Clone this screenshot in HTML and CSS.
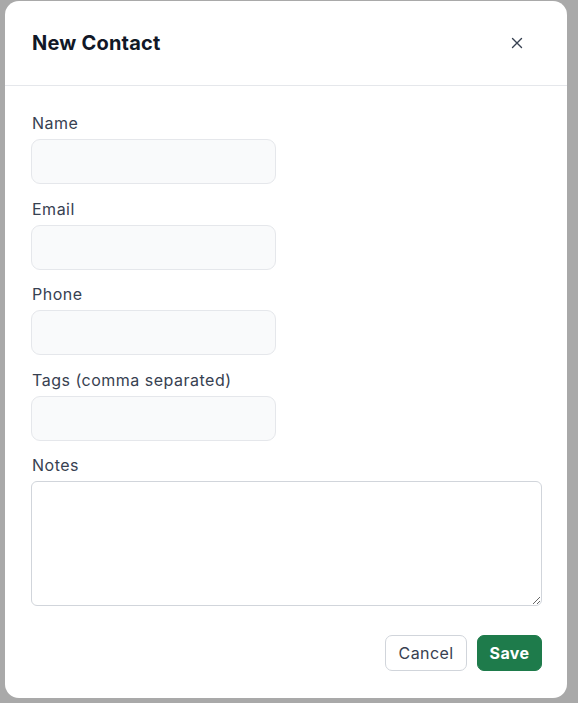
FILE: index.html
```html
<!DOCTYPE html>
<html lang="en">
<head>
<meta charset="utf-8">
<title>New Contact</title>
<link rel="stylesheet" href="styles.css">
</head>
<body>
<div class="backdrop">
  <div class="modal">
    <div class="modal-header">
      <h2 class="modal-title">New Contact</h2>
      <button class="close-btn" aria-label="Close">
        <svg width="12" height="12" viewBox="0 0 12 12"><path d="M1.5 1.5 L10.5 10.5 M10.5 1.5 L1.5 10.5" stroke="#374151" stroke-width="1.4" stroke-linecap="round" fill="none"/></svg>
      </button>
    </div>
    <form class="modal-body">
      <div class="field">
        <label class="label">Name</label>
        <input class="input" type="text">
      </div>
      <div class="field">
        <label class="label">Email</label>
        <input class="input" type="text">
      </div>
      <div class="field">
        <label class="label">Phone</label>
        <input class="input" type="text">
      </div>
      <div class="field">
        <label class="label">Tags (comma separated)</label>
        <input class="input" type="text">
      </div>
      <div class="field">
        <label class="label">Notes</label>
        <textarea class="textarea"></textarea>
      </div>
      <div class="actions">
        <button type="button" class="btn btn-cancel">Cancel</button>
        <button type="button" class="btn btn-save">Save</button>
      </div>
    </form>
  </div>
</div>
</body>
</html>
```
FILE: styles.css
```css
* { box-sizing: border-box; }
html, body { margin: 0; padding: 0; }
body {
  width: 578px;
  height: 703px;
  overflow: hidden;
  background: #a9a9a9;
  font-family: "Inter", "Noto Sans", sans-serif;
}
.backdrop {
  padding: 1px 11px 0 5px;
}
.modal {
  width: 562px;
  height: 697px;
  background: #fff;
  border-radius: 14px;
  display: flex;
  flex-direction: column;
}
.modal-header {
  height: 85px;
  border-bottom: 1px solid #e5e7eb;
  display: flex;
  align-items: center;
  justify-content: space-between;
  padding: 0 44px 0 27px;
}
.modal-title {
  margin: 0;
  font-size: 20px;
  font-weight: 700;
  color: #111827;
  letter-spacing: 0.2px;
}
.close-btn {
  border: 0;
  background: none;
  padding: 0;
  width: 12px;
  height: 12px;
  display: flex;
}
.modal-body {
  padding: 27px 25px 0 26px;
  display: flex;
  flex-direction: column;
}
.field {
  display: flex;
  flex-direction: column;
  align-items: flex-start;
  margin-bottom: 14.5px;
}
.label {
  font-size: 16px;
  line-height: 21px;
  letter-spacing: 0.5px;
  color: #374151;
  margin-bottom: 5px;
  padding-left: 1px;
}
.input {
  width: 245px;
  height: 45px;
  border: 1px solid #e5e7eb;
  background: #f9fafb;
  border-radius: 9px;
  font: inherit;
}
.textarea {
  width: 511px;
  height: 125px;
  border: 1px solid #d1d5db;
  background: #fff;
  border-radius: 6px;
  font: inherit;
  display: block;
}
.actions {
  display: flex;
  justify-content: flex-end;
  gap: 10px;
  margin-top: 14.5px;
}
.btn {
  height: 36px;
  border-radius: 7px;
  font-family: inherit;
  font-size: 16px;
  letter-spacing: 0.4px;
  padding: 0;
}
.btn-cancel {
  width: 82px;
  background: #fff;
  border: 1px solid #d1d5db;
  color: #374151;
  font-weight: 400;
}
.btn-save {
  width: 65px;
  background: #1e7b4b;
  border: 1px solid #1e7b4b;
  color: #fff;
  font-weight: 700;
}
```
